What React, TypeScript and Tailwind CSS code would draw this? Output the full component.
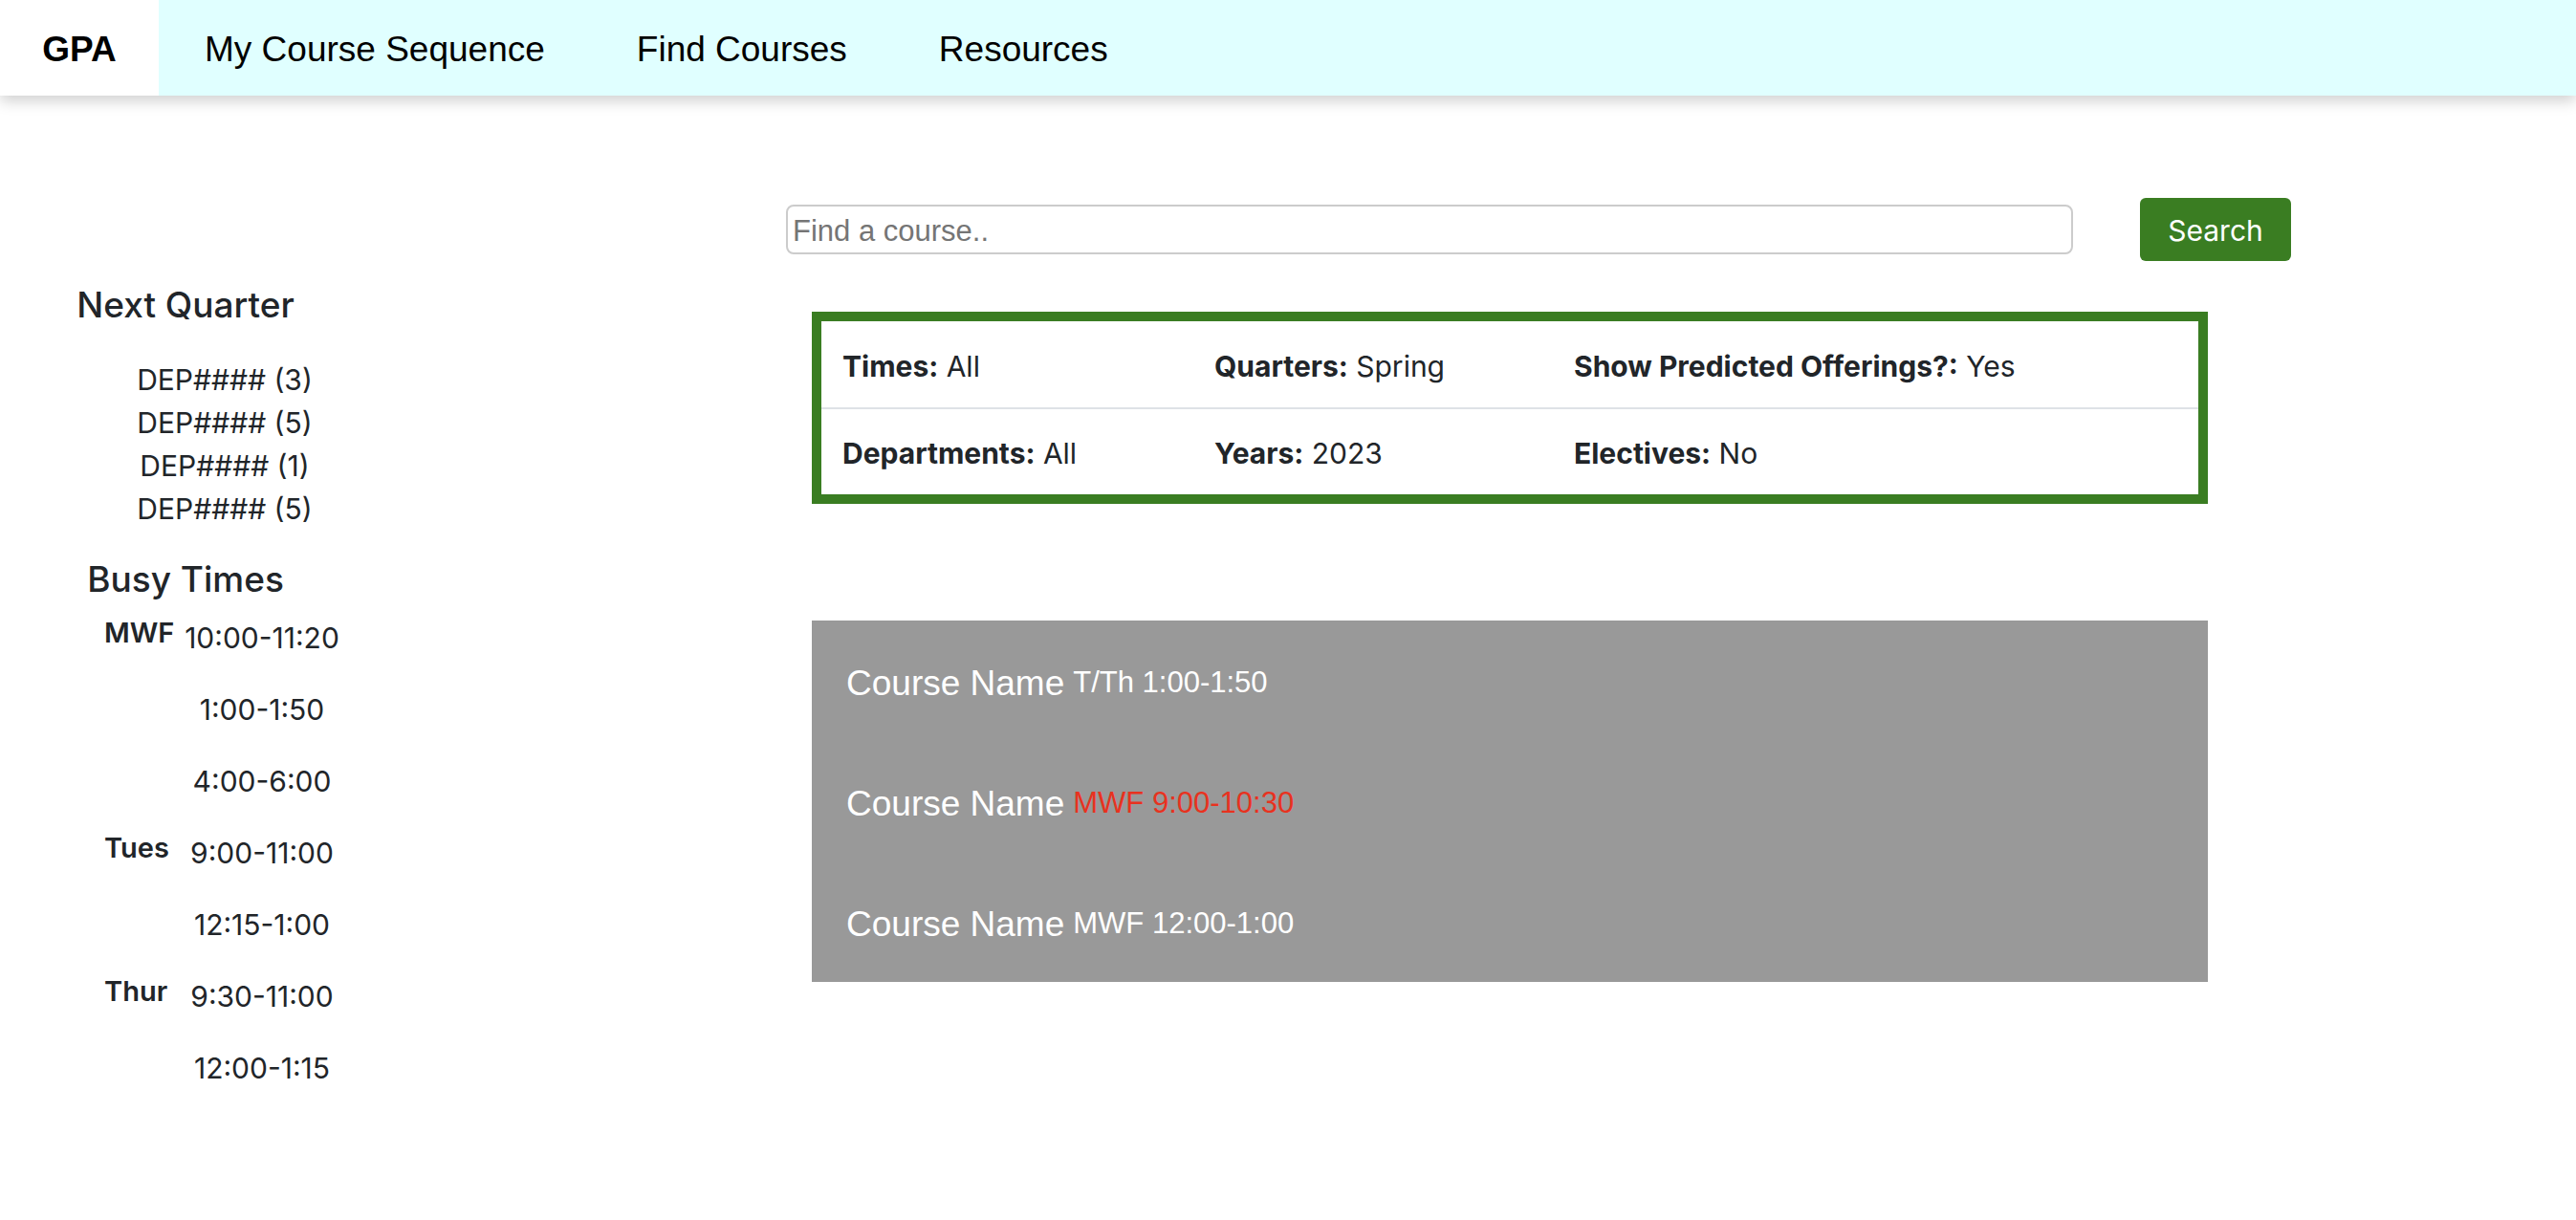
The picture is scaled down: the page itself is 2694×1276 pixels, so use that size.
import React from "react"

const navLinks = ["My Course Sequence", "Find Courses", "Resources"]

const nextQuarter = ["DEP#### (3)", "DEP#### (5)", "DEP#### (1)", "DEP#### (5)"]

const busyTimes = [
  { day: "MWF", time: "10:00-11:20" },
  { day: "", time: "1:00-1:50" },
  { day: "", time: "4:00-6:00" },
  { day: "Tues", time: "9:00-11:00" },
  { day: "", time: "12:15-1:00" },
  { day: "Thur", time: "9:30-11:00" },
  { day: "", time: "12:00-1:15" },
]

const filters = [
  [
    { label: "Times:", value: "All" },
    { label: "Quarters:", value: "Spring" },
    { label: "Show Predicted Offerings?:", value: "Yes" },
  ],
  [
    { label: "Departments:", value: "All" },
    { label: "Years:", value: "2023" },
    { label: "Electives:", value: "No" },
  ],
]

const courses = [
  { time: "T/Th 1:00-1:50", conflict: false },
  { time: "MWF 9:00-10:30", conflict: true },
  { time: "MWF 12:00-1:00", conflict: false },
]

const colWidths = ["w-[389px]", "w-[376px]", "flex-1"]

export default function App() {
  return (
    <div className="min-h-screen bg-white text-[#212529] font-['Inter',sans-serif]">
      {/* top nav */}
      <nav className="relative z-10 flex h-[100px] items-stretch bg-[#e0ffff] shadow-[0_6px_14px_rgba(0,0,0,0.18)] font-['Liberation_Sans',Arial,sans-serif] text-[37px] text-black">
        <div className="flex w-[166px] items-center justify-center bg-white pt-[3px] font-bold">GPA</div>
        {navLinks.map((link) => (
          <div key={link} className="flex items-center px-[48px] pt-[3px]">
            {link}
          </div>
        ))}
      </nav>

      <div className="flex">
        {/* sidebar */}
        <aside className="w-[388px] shrink-0 pt-[197px]">
          <h5 className="text-center text-[37px] font-medium leading-[44px]">Next Quarter</h5>
          <ul className="mt-[34px] pl-[82px] text-center text-[30px] leading-[45px]">
            {nextQuarter.map((c, i) => (
              <li key={i}>{c}</li>
            ))}
          </ul>
          <h5 className="mt-[29px] text-center text-[37px] font-medium leading-[44px]">Busy Times</h5>
          <div className="mt-[11px] ml-[109px] flex flex-col">
            {busyTimes.map((row, i) => (
              <div key={i} className="flex h-[75px] items-start">
                <div className="w-[78px] text-[29px] font-semibold leading-[45px]">{row.day}</div>
                <div className="mt-[6px] w-[174px] text-center text-[30px] leading-[45px]">{row.time}</div>
              </div>
            ))}
          </div>
        </aside>

        {/* main */}
        <main className="flex-1 pt-[107px]">
          <div className="ml-[434px] flex items-center">
            <input
              type="text"
              placeholder="Find a course.."
              className="h-[52px] w-[1346px] rounded-[8px] border-2 border-[#cccccc] px-[5px] pt-[3px] font-['Liberation_Sans',Arial,sans-serif] text-[31px] placeholder:text-[#757575] outline-none"
            />
            <button className="ml-[70px] h-[66px] w-[158px] rounded-[6px] bg-[#3a7d22] pt-[2px] text-[30px] text-white">
              Search
            </button>
          </div>

          <div className="ml-[461px] mt-[53px] w-[1460px] border-[10px] border-[#3a7d22] text-[30px]">
            {filters.map((row, r) => (
              <div
                key={r}
                className={`flex items-center pt-[4px] ${r === 0 ? "h-[92px] border-b-2 border-[#dee2e6]" : "h-[89px]"}`}
              >
                {row.map((f, i) => (
                  <div key={i} className={`${colWidths[i]} px-[22px]`}>
                    <span className="font-bold">{f.label}</span> {f.value}
                  </div>
                ))}
              </div>
            ))}
          </div>

          <div className="ml-[461px] mt-[122px] w-[1460px] bg-[#999999] font-['Liberation_Sans',Arial,sans-serif] text-white">
            {courses.map((c, i) => (
              <div key={i} className="flex h-[126px] items-center pl-[36px] pt-[5px]">
                <span className="text-[37px]">Course Name</span>
                <span className={`ml-[9px] text-[31px] ${c.conflict ? "text-[#e8321f]" : ""}`}>{c.time}</span>
              </div>
            ))}
          </div>
        </main>
      </div>
    </div>
  )
}
